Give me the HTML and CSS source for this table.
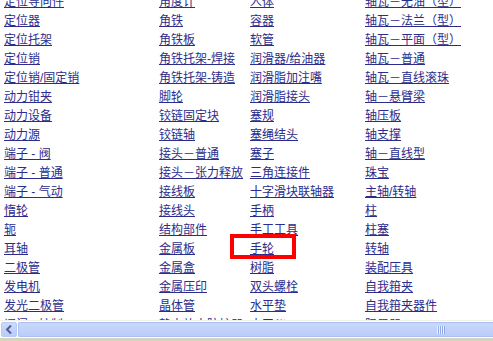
FILE: index.html
```html
<!DOCTYPE html>
<html lang="zh-CN">
<head>
<meta charset="utf-8">
<title>分类</title>
<link rel="stylesheet" href="styles.css">
</head>
<body>
<div class="window">
  <div class="viewport">
    <div class="list">
      <div class="col c1">
        <a href="#">定位导向件</a>
        <a href="#">定位器</a>
        <a href="#">定位托架</a>
        <a href="#">定位销</a>
        <a href="#">定位销/固定销</a>
        <a href="#">动力钳夹</a>
        <a href="#">动力设备</a>
        <a href="#">动力源</a>
        <a href="#">端子 - 阀</a>
        <a href="#">端子 - 普通</a>
        <a href="#">端子 - 气动</a>
        <a href="#">惰轮</a>
        <a href="#">轭</a>
        <a href="#">耳轴</a>
        <a href="#">二极管</a>
        <a href="#">发电机</a>
        <a href="#">发光二极管</a>
        <a href="#">阀门 - 控制</a>
      </div>
      <div class="col c2">
        <a href="#">角度计</a>
        <a href="#">角铁</a>
        <a href="#">角铁板</a>
        <a href="#">角铁托架-焊接</a>
        <a href="#">角铁托架-铸造</a>
        <a href="#">脚轮</a>
        <a href="#">铰链固定块</a>
        <a href="#">铰链轴</a>
        <a href="#">接头－普通</a>
        <a href="#">接头－张力释放</a>
        <a href="#">接线板</a>
        <a href="#">接线头</a>
        <a href="#">结构部件</a>
        <a href="#">金属板</a>
        <a href="#">金属盒</a>
        <a href="#">金属压印</a>
        <a href="#">晶体管</a>
        <a href="#">静电放电防护器</a>
      </div>
      <div class="col c3">
        <a href="#">人体</a>
        <a href="#">容器</a>
        <a href="#">软管</a>
        <a href="#">润滑器/给油器</a>
        <a href="#">润滑脂加注嘴</a>
        <a href="#">润滑脂接头</a>
        <a href="#">塞规</a>
        <a href="#">塞绳结头</a>
        <a href="#">塞子</a>
        <a href="#">三角连接件</a>
        <a href="#">十字滑块联轴器</a>
        <a href="#">手柄</a>
        <a href="#">手工工具</a>
        <a href="#">手轮</a>
        <a href="#">树脂</a>
        <a href="#">双头螺栓</a>
        <a href="#">水平垫</a>
        <a href="#">水平仪</a>
      </div>
      <div class="col c4">
        <a href="#">轴瓦－无油（型）</a>
        <a href="#">轴瓦－法兰（型）</a>
        <a href="#">轴瓦－平面（型）</a>
        <a href="#">轴瓦－普通</a>
        <a href="#">轴瓦－直线滚珠</a>
        <a href="#">轴－悬臂梁</a>
        <a href="#">轴压板</a>
        <a href="#">轴支撑</a>
        <a href="#">轴－直线型</a>
        <a href="#">珠宝</a>
        <a href="#">主轴/转轴</a>
        <a href="#">柱</a>
        <a href="#">柱塞</a>
        <a href="#">转轴</a>
        <a href="#">装配压具</a>
        <a href="#">自我箝夹</a>
        <a href="#">自我箝夹器件</a>
        <a href="#">阻尼器</a>
      </div>
    </div>
    <div class="highlight"></div>
  </div>
  <div class="hscroll">
    <div class="arrow-btn">
      <svg width="8" height="9" viewBox="0 0 8 9"><path d="M6 0.5 L2 4.5 L6 8.5" fill="none" stroke="#4d6185" stroke-width="2"/></svg>
    </div>
    <div class="thumb">
      <div class="grip"><span></span><span></span><span></span><span></span></div>
    </div>
  </div>
</div>
</body>
</html>
```
FILE: styles.css
```css
html, body {
  margin: 0;
  padding: 0;
  background: #ffffff;
}
.window {
  width: 493px;
  height: 341px;
  display: flex;
  flex-direction: column;
  overflow: hidden;
}
.viewport {
  position: relative;
  height: 320px;
  overflow: hidden;
  flex: none;
}
.list {
  display: grid;
  grid-template-columns: 155px 91px 115px 1fr;
  padding-left: 4px;
  margin-top: -7px;
  font-family: "Liberation Sans", "Noto Sans CJK SC", sans-serif;
  font-size: 12px;
  line-height: 19px;
}
.col {
  display: flex;
  flex-direction: column;
  align-items: flex-start;
  white-space: nowrap;
}
.col a {
  color: #2c2c8c;
  text-decoration: underline;
}
.highlight {
  position: absolute;
  left: 230px;
  top: 234px;
  width: 58px;
  height: 17px;
  border: 4px solid #ff0000;
}
.hscroll {
  flex: none;
  height: 21px;
  box-sizing: border-box;
  border-top: 1px solid #f2f1ea;
  border-bottom: 3px solid #d6d3c6;
  background: #fefefe;
  display: flex;
  align-items: stretch;
  padding: 1px 0 1px 1px;
  gap: 1px;
}
.arrow-btn {
  width: 16px;
  flex: none;
  box-sizing: border-box;
  border: 1px solid #b8cbf3;
  border-radius: 2px;
  background: linear-gradient(#cbdaff, #b8cbf8);
  display: flex;
  align-items: center;
  justify-content: center;
}
.thumb {
  flex: 1;
  box-sizing: border-box;
  border: 1px solid #a9c0f0;
  border-right: none;
  border-radius: 2px 0 0 2px;
  background: linear-gradient(#c9d8fd, #b9cdf9);
  position: relative;
}
.grip {
  position: absolute;
  left: 418px;
  top: 3px;
  display: flex;
  gap: 1px;
}
.grip span {
  width: 1px;
  height: 8px;
  background: #eef3ff;
  box-shadow: 1px 0 0 #8ea9e6;
}
```
